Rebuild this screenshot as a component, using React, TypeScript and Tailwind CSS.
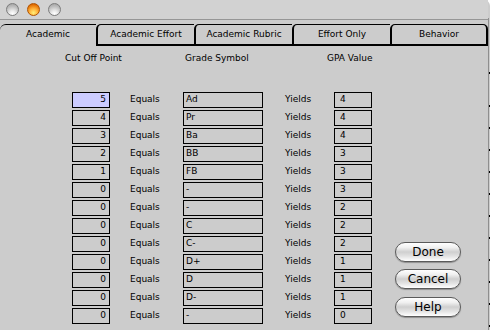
import React from 'react';

const FONT = "font-['DejaVu_Sans',Verdana,sans-serif]";

const rows: Array<{ cut: string; grade: string; gpa: string }> = [
  { cut: '5', grade: 'Ad', gpa: '4' },
  { cut: '4', grade: 'Pr', gpa: '4' },
  { cut: '3', grade: 'Ba', gpa: '4' },
  { cut: '2', grade: 'BB', gpa: '3' },
  { cut: '1', grade: 'FB', gpa: '3' },
  { cut: '0', grade: '-', gpa: '3' },
  { cut: '0', grade: '-', gpa: '2' },
  { cut: '0', grade: 'C', gpa: '2' },
  { cut: '0', grade: 'C-', gpa: '2' },
  { cut: '0', grade: 'D+', gpa: '1' },
  { cut: '0', grade: 'D', gpa: '1' },
  { cut: '0', grade: 'D-', gpa: '1' },
  { cut: '0', grade: '-', gpa: '0' },
];

const tabs = ['Academic', 'Academic Effort', 'Academic Rubric', 'Effort Only', 'Behavior'];

function Light({ active = false }: { active?: boolean }) {
  return (
    <span
      className={`block w-[13px] h-[13px] rounded-full border ${
        active
          ? 'border-[#b05200] bg-[radial-gradient(circle_at_50%_80%,#fff07a_0%,#ffb23a_40%,#e06a00_80%,#a84800_100%)]'
          : 'border-[#7c7c7c] bg-[radial-gradient(circle_at_50%_88%,#ffffff_0%,#ececec_25%,#bdbdbd_65%,#9c9c9c_100%)]'
      }`}
    />
  );
}

function Tab({ label, index }: { label: string; index: number }) {
  if (index === 0) {
    return (
      <div className="w-[96px] h-[22px] border-t border-black rounded-tl-[6px] flex items-center justify-center pb-[1px]">
        {label}
      </div>
    );
  }
  const last = index === tabs.length - 1;
  return (
    <div
      className={`w-[98px] h-[22px] border-t border-l-2 border-b-2 border-black rounded-tl-[5px] flex items-center justify-center pt-[1px] ${
        last ? 'border-r-2 rounded-tr-[5px] w-[97px]' : ''
      }`}
    >
      {label}
    </div>
  );
}

function AquaButton({ children }: { children: React.ReactNode }) {
  return (
    <button
      type="button"
      className="w-[66px] h-[20px] rounded-full border border-[#5a5a5a] bg-[linear-gradient(to_bottom,#ffffff_0%,#f0f0f0_25%,#cfcfcf_50%,#e4e4e4_75%,#ffffff_100%)] shadow-[0_1px_1px_rgba(0,0,0,0.3)] text-[12px] leading-none text-black flex items-center justify-center"
    >
      {children}
    </button>
  );
}

export default function App() {
  return (
    <div className={`w-[490px] h-[330px] bg-white overflow-hidden ${FONT} text-[9px] text-black`}>
      <div className="w-full h-full bg-[#cccccc] rounded-tr-[6px] flex">
        <div className="w-[488px] flex flex-col">
          {/* title bar */}
          <div className="h-[20px] bg-[#d2d2d2] border-b border-[#969696] flex items-center gap-[8px] pl-[6px] pb-[1px]">
            <Light />
            <Light active />
            <Light />
          </div>

          {/* tabs */}
          <div className="mt-[4px] flex">
            {tabs.map((t, i) => (
              <Tab key={t} label={t} index={i} />
            ))}
          </div>

          {/* column headers */}
          <div className="mt-[7px] h-[12px] flex items-center">
            <span className="pl-[65px] w-[185px]">Cut Off Point</span>
            <span className="w-[142px]">Grade Symbol</span>
            <span>GPA Value</span>
          </div>

          {/* body */}
          <div className="mt-[26px] flex">
            <div className="flex flex-col">
              {rows.map((r, i) => (
                <div key={i} className="h-[18px] flex items-center">
                  <span
                    className={`ml-[72px] w-[38px] h-[16px] border border-black flex items-center justify-end pr-[3px] ${
                      i === 0 ? 'bg-[#ccccff]' : ''
                    }`}
                  >
                    {r.cut}
                  </span>
                  <span className="w-[73px] pl-[20px]">Equals</span>
                  <span className="w-[80px] h-[16px] border border-black flex items-center pl-[2px]">{r.grade}</span>
                  <span className="w-[71px] pl-[22px]">Yields</span>
                  <span className="w-[38px] h-[16px] border border-black flex items-center pl-[5px]">{r.gpa}</span>
                </div>
              ))}
            </div>
            <div className="ml-[23px] self-end mb-[8px] flex flex-col gap-[7px]">
              <AquaButton>Done</AquaButton>
              <AquaButton>Cancel</AquaButton>
              <div className="mt-[1px]">
                <AquaButton>Help</AquaButton>
              </div>
            </div>
          </div>
        </div>

        {/* right window edge */}
        <div className="w-[2px] mt-[18px] border-l border-[#8e8e8e] flex flex-col items-end pt-[54px]">
          <span className="w-[1px] h-[2px] bg-black" />
          <div className="mt-[31px] h-[222px] flex flex-col justify-between">
            {Array.from({ length: 11 }).map((_, i) => (
              <span key={i} className="block w-[1px] h-[2px] bg-black" />
            ))}
          </div>
        </div>
      </div>
    </div>
  );
}
